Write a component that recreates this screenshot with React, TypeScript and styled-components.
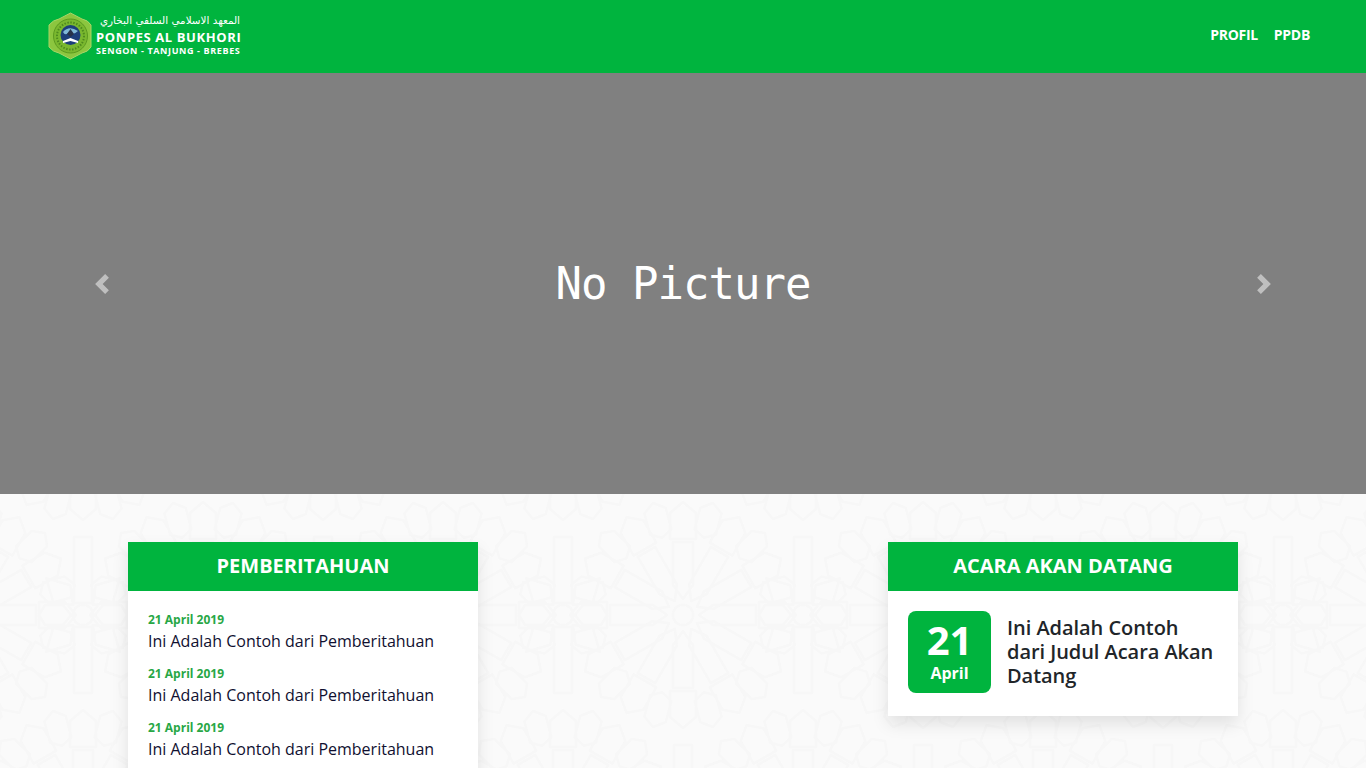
import React from "react";
import styled, { createGlobalStyle } from "styled-components";

type Pt = [number, number];

const buildPattern = () => {
  const w = 240;
  const h = 416;
  let d = "";
  // shape given in (radial, sideways) coordinates, turned round a centre
  const shape = (cx: number, cy: number, deg: number, pts: Pt[], closed = true) => {
    const a = (deg * Math.PI) / 180;
    const out = pts.map(([u, v]) => {
      const x = cx + u * Math.cos(a) - v * Math.sin(a);
      const y = cy + u * Math.sin(a) + v * Math.cos(a);
      return `${x.toFixed(1)} ${y.toFixed(1)}`;
    });
    d += `M${out.join("L")}${closed ? "Z" : ""}`;
  };
  const main = (cx: number, cy: number) => {
    for (let i = 0; i < 12; i++) {
      const deg = i * 30;
      shape(cx, cy, deg, [[16, 0], [30, -10], [73, -10], [73, 10], [30, 10]]);
      shape(cx, cy, deg, [[76, -13], [102, -13], [113, 0], [102, 13], [76, 13]]);
      shape(cx, cy, deg + 15, [[86, -11], [108, -11], [116, 0], [108, 11], [86, 11], [80, 0]]);
      shape(cx, cy, deg, [[10, -2.6], [10, 2.6]], false);
    }
  };
  const secondary = (cx: number, cy: number) => {
    for (let i = 0; i < 12; i++) {
      shape(cx, cy, i * 30, [[10, -2.6], [10, 2.6]], false);
    }
    [90, 270].forEach((deg) => {
      shape(cx, cy, deg, [[12, -9], [78, -9], [78, 9], [12, 9]]);
    });
    [0, 180].forEach((deg) => {
      shape(cx, cy, deg, [[12, 0], [20, -10], [38, -10], [44, 0], [38, 10], [20, 10]]);
    });
    [45, 135, 225, 315].forEach((deg) => {
      shape(cx, cy, deg, [[14, 0], [30, -12], [52, 0], [30, 12]]);
    });
  };
  const mains: Pt[] = [[0, 0], [240, 0], [0, 416], [240, 416], [120, 208]];
  const seconds: Pt[] = [[120, 0], [120, 416], [0, 208], [240, 208]];
  mains.forEach(([x, y]) => main(x, y));
  seconds.forEach(([x, y]) => secondary(x, y));
  const svg = `<svg xmlns='http://www.w3.org/2000/svg' width='${w}' height='${h}'><path d='${d}' fill='none' stroke='#f7f7f7' stroke-width='2.5' stroke-linejoin='round'/></svg>`;
  return `url("data:image/svg+xml,${encodeURIComponent(svg)}")`;
};

const GlobalStyle = createGlobalStyle`
  html, body {
    margin: 0;
    height: 100%;
    overflow: hidden;
  }
  body {
    font-family: "Open Sans", "Liberation Sans", sans-serif;
    color: #212529;
    background: #fafafa;
  }
`;

const Page = styled.div`
  min-height: 100vh;
`;

const Header = styled.header`
  height: 73px;
  background: #00b43e;
  display: flex;
  align-items: center;
  justify-content: space-between;
  padding: 0 48px;
  box-sizing: border-box;
`;

const Brand = styled.a`
  display: flex;
  align-items: center;
  gap: 3px;
  color: #fff;
  text-decoration: none;
  margin-top: -1px;
`;

const BrandText = styled.div`
  display: flex;
  flex-direction: column;
  width: 146px;
  padding-bottom: 4px;
`;

const BrandArabic = styled.span`
  font-family: "DejaVu Sans", sans-serif;
  font-size: 10.4px;
  line-height: 14px;
  text-align: right;
  white-space: nowrap;
  padding-right: 2px;
  margin-bottom: 2px;
`;

const BrandName = styled.span`
  font-size: 13px;
  font-weight: 700;
  line-height: 16px;
  letter-spacing: 0.6px;
  white-space: nowrap;
`;

const BrandSub = styled.span`
  font-size: 9px;
  font-weight: 700;
  line-height: 11px;
  letter-spacing: 0.62px;
  white-space: nowrap;
`;

const Nav = styled.nav`
  display: flex;
  gap: 16px;
  padding-right: 8px;
  margin-top: -3px;
`;

const NavLink = styled.a`
  color: #fff;
  font-size: 14px;
  font-weight: 700;
  line-height: 20px;
  letter-spacing: -0.3px;
  text-decoration: none;
`;

const Carousel = styled.section`
  position: relative;
  height: 421px;
  background: #808080;
  display: flex;
  align-items: center;
  justify-content: center;
`;

const NoPicture = styled.div`
  font-family: "DejaVu Sans Mono", "Liberation Mono", monospace;
  font-size: 44px;
  letter-spacing: -1px;
  line-height: 60px;
  color: #fff;
`;

const Control = styled.button<{ $side: "left" | "right" }>`
  position: absolute;
  top: 0;
  bottom: 0;
  ${(p) => p.$side}: 0;
  width: 15%;
  padding: 0;
  border: 0;
  background: none;
  display: flex;
  align-items: center;
  justify-content: center;
  opacity: 0.5;
`;

const Content = styled.main`
  background-color: #fafafa;
  background-image: ${buildPattern()};
  background-position: 203px 121px;
  padding: 48px 113px;
  display: grid;
  grid-template-columns: repeat(3, 380px);
  align-items: start;
`;

const Card = styled.article<{ $col: number }>`
  grid-column: ${(p) => p.$col};
  margin: 0 15px;
  background: #fff;
  box-shadow: 0 8px 16px rgba(0, 0, 0, 0.1);
`;

const CardTitle = styled.h2`
  margin: 0;
  height: 49px;
  background: #00b43e;
  color: #fff;
  font-size: 20px;
  font-weight: 700;
  line-height: 48px;
  text-align: center;
`;

const NoticeList = styled.div`
  padding: 20px 20px 12px;
  display: flex;
  flex-direction: column;
  gap: 12px;
`;

const Notice = styled.div`
  display: flex;
  flex-direction: column;
`;

const NoticeDate = styled.span`
  font-size: 12px;
  font-weight: 700;
  line-height: 18px;
  color: #28a745;
`;

const NoticeTitle = styled.span`
  font-size: 16px;
  line-height: 24px;
  color: #101030;
`;

const EventRow = styled.div`
  display: flex;
  gap: 16px;
  padding: 20px 20px 23px;
  align-items: center;
`;

const DateBox = styled.div`
  flex: none;
  width: 83px;
  height: 82px;
  border-radius: 8px;
  background: #00b43e;
  color: #fff;
  display: flex;
  flex-direction: column;
  align-items: center;
  justify-content: center;
  padding-bottom: 2px;
  box-sizing: border-box;
`;

const DateDay = styled.span`
  font-size: 40px;
  font-weight: 700;
  line-height: 44px;
`;

const DateMonth = styled.span`
  font-size: 16px;
  font-weight: 700;
  line-height: 22px;
`;

const EventTitle = styled.div`
  font-size: 20px;
  font-weight: 600;
  line-height: 24px;
  letter-spacing: -0.05px;
  color: #212529;
`;

const Logo = () => (
  <svg width="45" height="48" viewBox="0 0 45 48" aria-hidden="true">
    <path
      d="M22.5 1 L34 7 Q40 8 43 13 L43 35 Q40 40 34 41 L22.5 47 L11 41 Q5 40 1 35 L1 13 Q5 8 11 7 Z"
      fill="#8cc63f"
      stroke="#a8d468"
      strokeWidth="1"
    />
    <circle cx="22.5" cy="24" r="17" fill="#7ab82f" stroke="#5c9a20" strokeWidth="1" />
    <circle cx="22.5" cy="24" r="13.5" fill="none" stroke="#4e8a1e" strokeWidth="2" strokeDasharray="1.5 1.5" />
    <circle cx="22.5" cy="23" r="10" fill="#1d3f7a" />
    <path d="M15 20 Q21 13 30 19 Q25 24 20 21 Q17 24 15 20Z" fill="#7fb8d8" />
    <path d="M15 29 L22.5 26 L30 29 L30 31 L22.5 29 L15 31Z" fill="#fff" />
    <path d="M22.5 17 L26 22 L22.5 25 L19 22Z" fill="#27324a" />
  </svg>
);

const Chevron = ({ left }: { left?: boolean }) => (
  <svg width="20" height="20" viewBox="0 0 8 8" fill="#fff" aria-hidden="true">
    <path
      d={
        left
          ? "M5.25 0l-4 4 4 4 1.5-1.5-2.5-2.5 2.5-2.5-1.5-1.5z"
          : "M2.75 0l-1.5 1.5 2.5 2.5-2.5 2.5 1.5 1.5 4-4-4-4z"
      }
    />
  </svg>
);

const notices = [0, 1, 2, 3];

export default function App() {
  return (
    <Page>
      <GlobalStyle />
      <Header>
        <Brand href="#">
          <Logo />
          <BrandText>
            <BrandArabic dir="rtl">المعهد الاسلامي السلفي البخاري</BrandArabic>
            <BrandName>PONPES AL BUKHORI</BrandName>
            <BrandSub>SENGON - TANJUNG - BREBES</BrandSub>
          </BrandText>
        </Brand>
        <Nav>
          <NavLink href="#">PROFIL</NavLink>
          <NavLink href="#">PPDB</NavLink>
        </Nav>
      </Header>
      <Carousel>
        <NoPicture>No Picture</NoPicture>
        <Control $side="left" aria-label="Previous">
          <Chevron left />
        </Control>
        <Control $side="right" aria-label="Next">
          <Chevron />
        </Control>
      </Carousel>
      <Content>
        <Card $col={1}>
          <CardTitle>PEMBERITAHUAN</CardTitle>
          <NoticeList>
            {notices.map((n) => (
              <Notice key={n}>
                <NoticeDate>21 April 2019</NoticeDate>
                <NoticeTitle>Ini Adalah Contoh dari Pemberitahuan</NoticeTitle>
              </Notice>
            ))}
          </NoticeList>
        </Card>
        <Card $col={3}>
          <CardTitle>ACARA AKAN DATANG</CardTitle>
          <EventRow>
            <DateBox>
              <DateDay>21</DateDay>
              <DateMonth>April</DateMonth>
            </DateBox>
            <EventTitle>Ini Adalah Contoh dari Judul Acara Akan Datang</EventTitle>
          </EventRow>
        </Card>
      </Content>
    </Page>
  );
}
